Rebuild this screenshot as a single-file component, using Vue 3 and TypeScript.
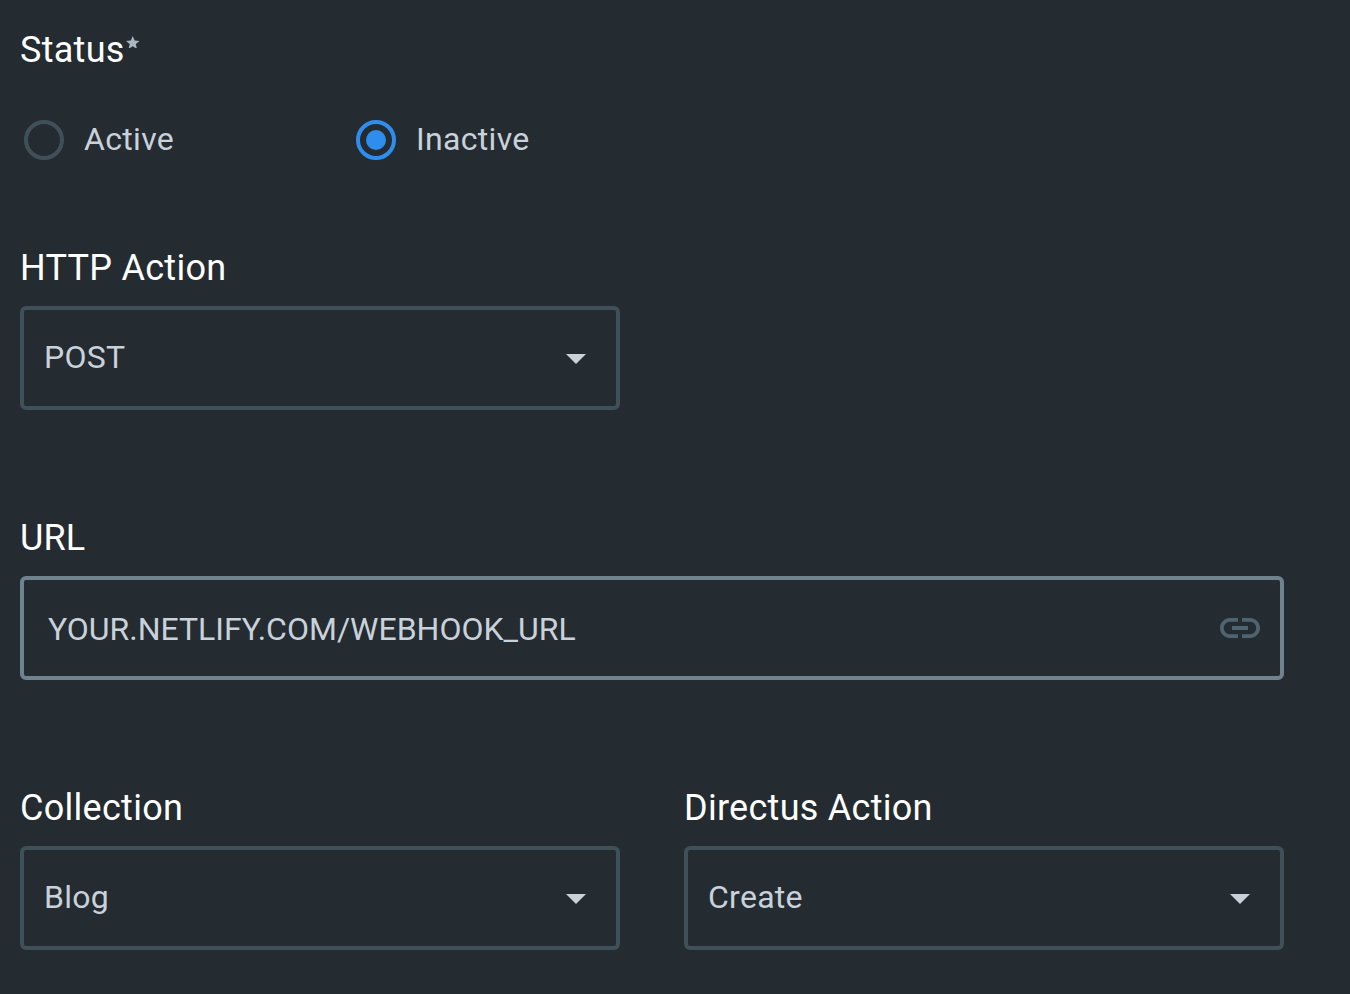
<script setup lang="ts">
import { ref } from 'vue'

interface SelectField {
  label: string
  value: string
}

const statuses: string[] = ['Active', 'Inactive']
const selected = ref('Inactive')
const httpAction: SelectField = { label: 'HTTP Action', value: 'POST' }
const targets: SelectField[] = [
  { label: 'Collection', value: 'Blog' },
  { label: 'Directus Action', value: 'Create' },
]
</script>

<template>
  <main class="form">
    <section class="status">
      <div class="label">Status<svg class="star" viewBox="2 2 20 19"><path d="M12 17.27L18.18 21l-1.64-7.03L22 9.24l-7.19-.61L12 2 9.19 8.63 2 9.24l5.46 4.73L5.82 21z" /></svg></div>
      <div class="radios">
        <div v-for="s in statuses" :key="s" class="radio" :class="{ on: s === selected }" @click="selected = s">
          <span class="ring"></span><span class="option">{{ s }}</span>
        </div>
      </div>
    </section>

    <section class="row">
      <div class="field">
        <div class="label">{{ httpAction.label }}</div>
        <div class="box select">
          <span>{{ httpAction.value }}</span>
          <svg class="caret" viewBox="0 0 20 10"><path d="M0 0h20L10 10z" /></svg>
        </div>
      </div>
    </section>

    <section class="row">
      <div class="field wide">
        <div class="label url-label">URL</div>
        <div class="box url">
          <span>YOUR.NETLIFY.COM/WEBHOOK_URL</span>
          <svg class="link" viewBox="0 0 24 24"><path d="M3.9 12c0-1.71 1.39-3.1 3.1-3.1h4V7H7c-2.76 0-5 2.24-5 5s2.24 5 5 5h4v-1.9H7c-1.71 0-3.1-1.39-3.1-3.1zM8 13h8v-2H8v2zm9-6h-4v1.9h4c1.71 0 3.1 1.39 3.1 3.1s-1.39 3.1-3.1 3.1h-4V17h4c2.76 0 5-2.24 5-5s-2.24-5-5-5z" /></svg>
        </div>
      </div>
    </section>

    <section class="row">
      <div v-for="t in targets" :key="t.label" class="field">
        <div class="label">{{ t.label }}</div>
        <div class="box select">
          <span>{{ t.value }}</span>
          <svg class="caret" viewBox="0 0 20 10"><path d="M0 0h20L10 10z" /></svg>
        </div>
      </div>
    </section>
  </main>
</template>

<style>
body { background: #242b31; }
</style>

<style scoped>
.form {
  box-sizing: border-box;
  width: 1350px;
  height: 994px;
  padding: 28px 66px 0 20px;
  overflow: hidden;
  background: #242b31;
  color: #c9d1da;
  font-family: Roboto, sans-serif;
}
.status { height: 218px; }
.label {
  height: 44px;
  display: flex;
  line-height: 44px;
  font-size: 36px;
  letter-spacing: 0.28px;
  color: #fff;
  white-space: nowrap;
}
.url-label { letter-spacing: 0.1px; }
.star { width: 13.5px; height: 12.8px; margin: 7.6px 0 0 1.7px; fill: #a9b7c0; }
.radios { display: flex; margin-top: 44px; padding-left: 4px; }
.radio { display: flex; align-items: center; width: 332px; height: 48px; }
.ring {
  box-sizing: border-box;
  width: 40px;
  height: 40px;
  border: 4px solid #405058;
  border-radius: 50%;
  display: grid;
  place-items: center;
}
.on .ring { border-color: #2f8eed; }
.on .ring::after { content: ''; width: 20px; height: 20px; border-radius: 50%; background: #2f8eed; }
.option { margin: 0 0 2px 20px; font-size: 32px; letter-spacing: 0.32px; }
.row { display: flex; gap: 64px; height: 270px; }
.field { width: 600px; }
.wide { width: 1264px; }
.box {
  box-sizing: border-box;
  height: 104px;
  margin-top: 16px;
  border: 4px solid #405058;
  border-radius: 6px;
  display: flex;
  justify-content: space-between;
  align-items: center;
  font-size: 32px;
}
.select { padding: 0 30px 0 20px; letter-spacing: 0.28px; }
.select span { margin-bottom: 2px; }
.caret { width: 20px; height: 10px; margin-top: 2px; fill: #c9d1da; }
.url { padding: 0 16px 0 24px; border-color: #6e8290; }
.url span { margin-top: 1px; }
.link { width: 48px; height: 48px; fill: #4e6470; }
</style>
